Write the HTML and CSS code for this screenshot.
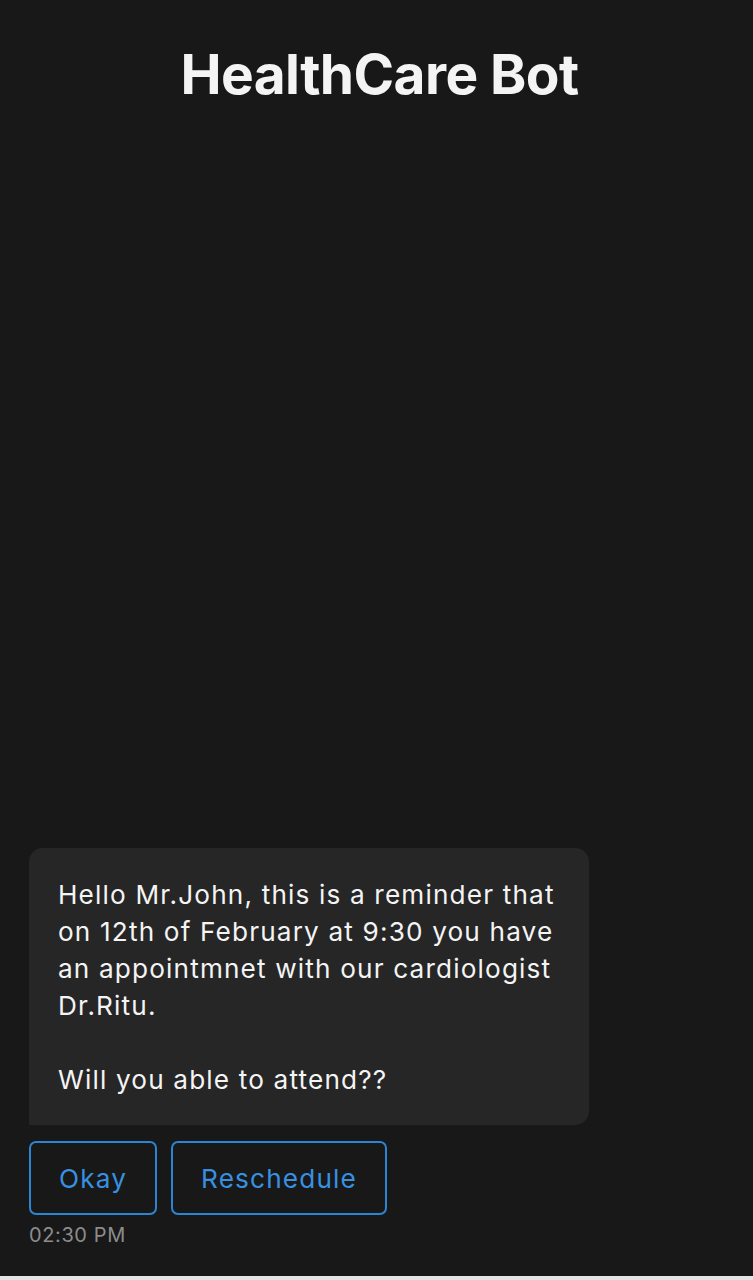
FILE: index.html
```html
<!DOCTYPE html>
<html lang="en">
<head>
<meta charset="utf-8">
<title>HealthCare Bot</title>
<link rel="stylesheet" href="styles.css">
</head>
<body>
  <div class="app">
    <header class="header">
      <h1 class="title">HealthCare Bot</h1>
    </header>
    <main class="chat">
      <div class="message">
        <div class="bubble">Hello Mr.John, this is a reminder that on 12th of February at 9:30 you have an appointmnet with our cardiologist Dr.Ritu.

Will you able to attend??</div>
        <div class="actions">
          <button class="btn">Okay</button>
          <button class="btn">Reschedule</button>
        </div>
        <div class="time">02:30 PM</div>
      </div>
    </main>
    <div class="bottom-bar"></div>
  </div>
</body>
</html>
```

FILE: styles.css
```css
* { box-sizing: border-box; }

html, body {
  margin: 0;
  padding: 0;
  background: #181818;
}

body {
  font-family: Inter, "Noto Sans", sans-serif;
  color: #f2f2f2;
}

.app {
  height: 1280px;
  display: flex;
  flex-direction: column;
}

.header {
  padding-top: 41px;
  display: flex;
  justify-content: center;
}

.title {
  margin: 0 0 0 6px;
  font-size: 55px;
  font-weight: 700;
  line-height: 66px;
  letter-spacing: -0.6px;
  color: #f4f4f4;
}

.chat {
  flex: 1;
  display: flex;
  flex-direction: column;
  justify-content: flex-end;
  padding: 0 29px 28px;
}

.message {
  display: flex;
  flex-direction: column;
  align-items: flex-start;
}

.bubble {
  width: 560px;
  background: #262626;
  border-radius: 14px 14px 14px 0;
  padding: 28px 29px 27px;
  font-size: 26.2px;
  line-height: 37px;
  letter-spacing: 1.15px;
  color: #f4f4f4;
  white-space: pre-wrap;
}

.actions {
  display: flex;
  gap: 14px;
  margin-top: 16px;
}

.btn {
  height: 74px;
  padding: 0 28px;
  background: transparent;
  border: 2px solid #2b84d4;
  border-radius: 7px;
  font-family: Inter, "Noto Sans", sans-serif;
  font-size: 26.2px;
  letter-spacing: 1.15px;
  color: #3791e0;
}

.time {
  margin-top: 7px;
  font-size: 20px;
  line-height: 26px;
  letter-spacing: 0.6px;
  color: #8c8c8c;
}

.bottom-bar {
  height: 4px;
  background: #e4e4e4;
}
```
